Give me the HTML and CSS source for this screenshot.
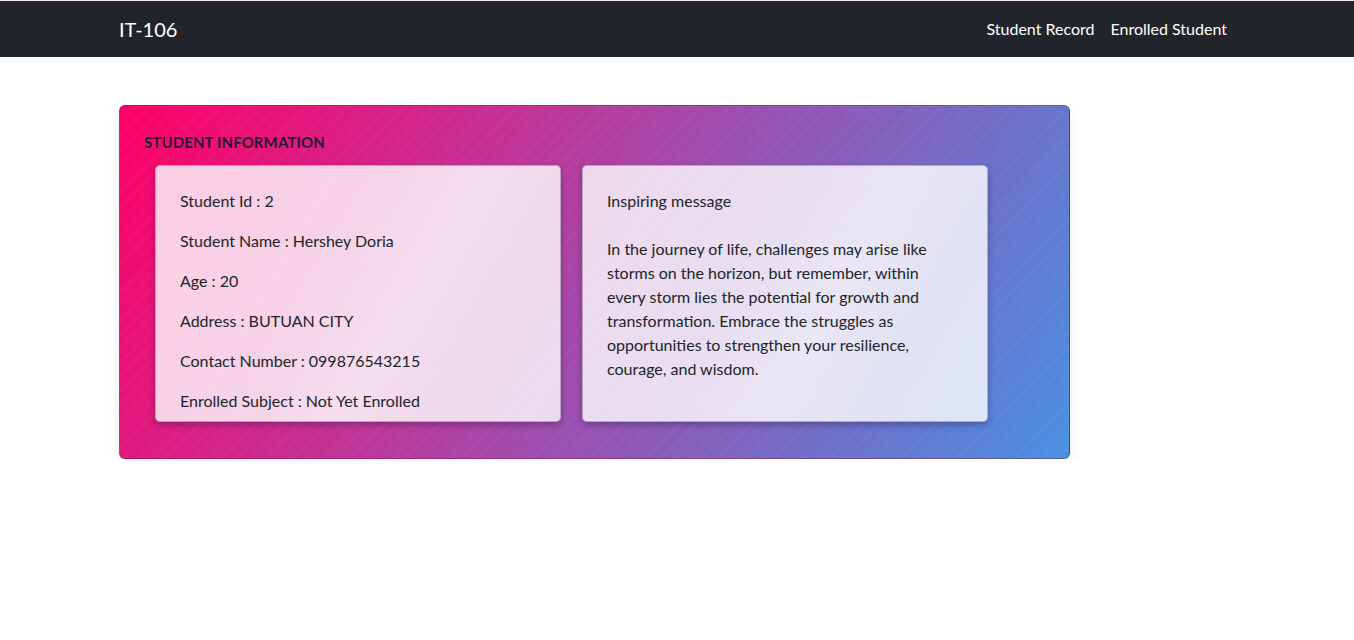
FILE: index.html
```html
<!DOCTYPE html>
<html lang="en">
<head>
<meta charset="utf-8">
<title>IT-106</title>
<link rel="stylesheet" href="styles.css">
</head>
<body>
<nav class="navbar">
  <div class="container nav-inner">
    <a class="brand" href="#">IT-106</a>
    <ul class="nav-links">
      <li><a href="#">Student Record</a></li>
      <li><a href="#">Enrolled Student</a></li>
    </ul>
  </div>
</nav>
<main class="container">
  <section class="info-card">
    <h5 class="info-title">STUDENT INFORMATION</h5>
    <div class="info-row">
      <div class="glass">
        <p>Student Id : 2</p>
        <p>Student Name : Hershey Doria</p>
        <p>Age : 20</p>
        <p>Address : BUTUAN CITY</p>
        <p>Contact Number : 099876543215</p>
        <p>Enrolled Subject : Not Yet Enrolled</p>
      </div>
      <div class="glass">
        <p class="msg-title">Inspiring message</p>
        <p class="msg">In the journey of life, challenges may arise like storms on the horizon, but remember, within every storm lies the potential for growth and transformation. Embrace the struggles as opportunities to strengthen your resilience, courage, and wisdom.</p>
      </div>
    </div>
  </section>
</main>
</body>
</html>
```
FILE: styles.css
```css
* { box-sizing: border-box; }
html, body { margin: 0; padding: 0; }
body {
  font-family: Lato, "Noto Sans", sans-serif;
  font-size: 16px;
  line-height: 24px;
  color: #212529;
  background: #fff;
}
.container {
  width: 1140px;
  margin: 0 auto;
  padding: 0 12px;
}
.navbar {
  background: #212529;
  height: 57px;
  border-top: 1px solid #f3e3ea;
}
.nav-inner {
  display: flex;
  align-items: center;
  justify-content: space-between;
  height: 56px;
}
.brand {
  color: #fff;
  text-decoration: none;
  font-size: 20px;
  line-height: 30px;
}
.nav-links {
  list-style: none;
  margin: 0;
  padding: 0;
  display: flex;
}
.nav-links a {
  display: block;
  padding: 8px;
  color: #fff;
  text-decoration: none;
  font-size: 16px;
}
.info-card {
  margin-top: 48px;
  width: 951px;
  height: 354px;
  border-radius: 6px;
  padding: 26px 25px 0 24px;
  border: 1px solid rgba(60, 40, 90, 0.35);
  background:
    repeating-linear-gradient(135deg, rgba(255,255,255,0.025) 0 3px, rgba(255,255,255,0) 3px 10px),
    linear-gradient(120deg, #ff0066 0%, #cc2a8f 30%, #9b50b0 55%, #6f6fc8 78%, #4a90e2 100%);
  box-shadow: 0 6px 12px rgba(0,0,0,0.08);
}
.info-title {
  margin: 0 0 13px 0;
  font-size: 15px;
  line-height: 20px;
  font-weight: 700;
  color: #2a1530;
  letter-spacing: 0.1px;
}
.info-row {
  display: flex;
  gap: 21px;
  padding-left: 11px;
}
.glass {
  width: 406px;
  height: 257px;
  padding: 23px 24px 8px 24px;
  border-radius: 5px;
  border: 1px solid rgba(90, 60, 110, 0.35);
  background:
    linear-gradient(120deg, rgba(255,255,255,0) 40%, rgba(255,255,255,0.2) 60%, rgba(255,255,255,0) 75%),
    rgba(255, 255, 255, 0.8);
  box-shadow: 0 3px 6px rgba(40, 20, 60, 0.35);
}
.glass p {
  margin: 0 0 16px 0;
}
.glass p:last-child { margin-bottom: 0; }
.glass .msg-title { margin-bottom: 24px; }
.glass .msg { max-width: 340px; }
```
